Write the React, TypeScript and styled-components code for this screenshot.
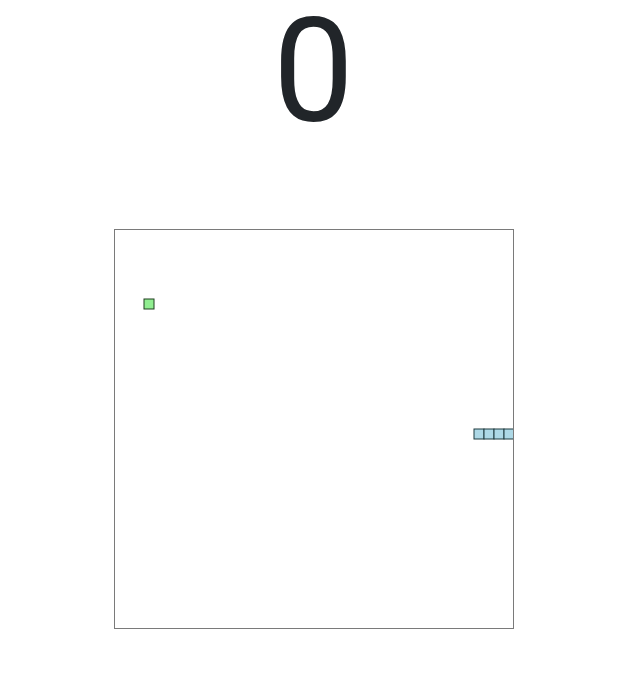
import React from "react";
import styled, { createGlobalStyle } from "styled-components";

const GlobalStyle = createGlobalStyle`
  html, body { margin: 0; padding: 0; background: #ffffff; }
  body { font-family: Roboto, "Liberation Sans", Arial, sans-serif; color: #212529; }
`;

const Page = styled.div`
  box-sizing: border-box;
  width: 100%;
  padding-left: 10px;
  display: flex;
  flex-direction: column;
  align-items: center;
`;

const Score = styled.div`
  font-family: Roboto, "Liberation Sans", Arial, sans-serif;
  font-size: 144px;
  font-weight: 400;
  line-height: 1;
  color: #212529;
  margin: 0;
`;

const Board = styled.div`
  box-sizing: border-box;
  margin-top: 85px;
  width: 400px;
  height: 400px;
  border: 1px solid #7a7a7a;
  background: #ffffff;
  overflow: hidden;
  display: flex;
`;

type Cell = { x: number; y: number };

const snake: Cell[] = [
  { x: 359, y: 199 },
  { x: 369, y: 199 },
  { x: 379, y: 199 },
  { x: 389, y: 199 },
];
const food: Cell = { x: 29, y: 69 };

export default function App() {
  return (
    <>
      <GlobalStyle />
      <Page>
        <Score>0</Score>
        <Board>
          <svg width="398" height="398" viewBox="0 0 398 398">
            <rect x={food.x} y={food.y} width="10" height="10" fill="#90ee90" stroke="#1f3f1f" strokeWidth="1" />
            {snake.map((s, i) => (
              <rect key={i} x={s.x} y={s.y} width="10" height="10" fill="#add8e6" stroke="#1f3a3f" strokeWidth="1" />
            ))}
          </svg>
        </Board>
      </Page>
    </>
  );
}
